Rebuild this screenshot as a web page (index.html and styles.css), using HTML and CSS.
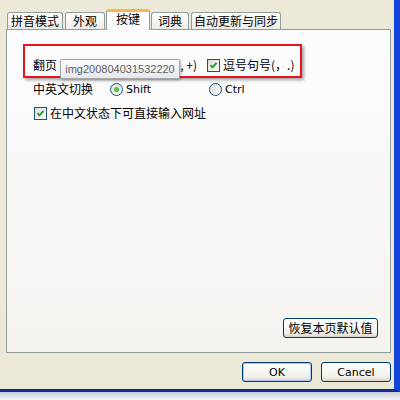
FILE: index.html
```html
<!DOCTYPE html>
<html>
<head>
<meta charset="utf-8">
<link rel="stylesheet" href="styles.css">
</head>
<body>
<div class="window">
  <div class="tabs">
    <div class="tab t1">拼音模式</div>
    <div class="tab t2">外观</div>
    <div class="tab t3 sel">按键</div>
    <div class="tab t4">词典</div>
    <div class="tab t5">自动更新与同步</div>
  </div>
  <div class="panel">
    <div class="grid">
      <div class="lbl">翻页</div>
      <div class="opt"><span class="cb"><svg viewBox="0 0 11 11" width="11" height="11"><path d="M2.5 5.2 L4.5 7.4 L8.6 2.8" fill="none" stroke="#21a121" stroke-width="1.9"/></svg></span><span class="txt">减号加号(-, +)</span></div>
      <div class="opt"><span class="cb"><svg viewBox="0 0 11 11" width="11" height="11"><path d="M2.5 5.2 L4.5 7.4 L8.6 2.8" fill="none" stroke="#21a121" stroke-width="1.9"/></svg></span><span class="txt">逗号句号(，.)</span></div>
      <div class="lbl">中英文切换</div>
      <div class="opt"><span class="rb on"></span><span class="txt lat">Shift</span></div>
      <div class="opt"><span class="rb"></span><span class="txt lat">Ctrl</span></div>
      <div class="opt wide"><span class="cb"><svg viewBox="0 0 11 11" width="11" height="11"><path d="M2.5 5.2 L4.5 7.4 L8.6 2.8" fill="none" stroke="#21a121" stroke-width="1.9"/></svg></span><span class="txt">在中文状态下可直接输入网址</span></div>
    </div>
    <div class="panel-foot"><button class="btn reset">恢复本页默认值</button></div>
    <div class="annot"></div>
    <div class="tooltip">img200804031532220</div>
  </div>
  <div class="footer">
    <button class="btn ok">OK</button>
    <button class="btn cancel">Cancel</button>
  </div>
</div>
<div class="below"></div>
</body>
</html>
```
FILE: styles.css
```css
html, body {
  margin: 0;
  padding: 0;
}
body {
  width: 400px;
  height: 400px;
  overflow: hidden;
  background: #f2f2f6;
  font-family: "Noto Sans CJK SC", sans-serif;
  font-size: 12px;
  color: #000;
}
.window {
  box-sizing: border-box;
  width: 400px;
  height: 392px;
  background: #ece9d8;
  border-right: 6px solid #1343d8;
  border-bottom: 3px solid #0e2b8c;
  padding: 9px 3px 0 6px;
  display: flex;
  flex-direction: column;
}
.below {
  height: 8px;
  background: linear-gradient(#c9cbd8, #f3f3f7);
}
.tabs {
  display: flex;
  align-items: flex-end;
  height: 21px;
  margin-bottom: -1px;
  padding-left: 1px;
  position: relative;
  z-index: 2;
}
.tab {
  box-sizing: border-box;
  height: 17px;
  margin-bottom: 1px;
  border: 1px solid #919b9c;
  border-bottom: none;
  border-radius: 3px 3px 0 0;
  background: linear-gradient(#ffffff, #ecebe6);
  display: flex;
  align-items: center;
  justify-content: center;
  line-height: 1;
  margin-right: 1px;
}
.t1 { width: 56px; }
.t2 { width: 40px; margin-left: 1px; }
.t3 { width: 44px; }
.t4 { width: 38px; }
.t5 { width: 90px; margin-left: 1px; }
.tab.sel {
  height: 21px;
  margin-bottom: 0;
  background: #fcfcfe;
  border-top: 3px solid #f7b940;
  padding-bottom: 4px;
}
.panel {
  position: relative;
  box-sizing: border-box;
  height: 324px;
  border: 1px solid #919b9c;
  background: linear-gradient(#fcfcfe, #f4f3ee);
  display: flex;
  flex-direction: column;
  padding: 23px 0 0 26px;
}
.grid {
  display: grid;
  grid-template-columns: 75px 99px auto;
  grid-auto-rows: 24px;
  align-items: center;
}
.lbl {
  line-height: 1;
}
.opt {
  display: flex;
  align-items: center;
  gap: 3px;
}
.opt.wide {
  grid-column: 1 / 4;
  margin-left: 1px;
}
.txt {
  line-height: 1;
}
.lat {
  font-family: "DejaVu Sans", sans-serif;
  font-size: 11px;
}
.cb {
  box-sizing: border-box;
  width: 13px;
  height: 13px;
  border: 1px solid #1c5180;
  background: linear-gradient(135deg, #dcdcd7, #ffffff);
  display: flex;
  align-items: center;
  justify-content: center;
  flex: none;
}
.rb {
  box-sizing: border-box;
  width: 13px;
  height: 13px;
  border: 1px solid #1c5180;
  border-radius: 50%;
  background: linear-gradient(135deg, #dcdcd7, #ffffff);
  margin-left: 2px;
  display: flex;
  align-items: center;
  justify-content: center;
  flex: none;
}
.rb.on::after {
  content: "";
  width: 5px;
  height: 5px;
  border-radius: 50%;
  background: radial-gradient(circle at 40% 40%, #5be05b, #21a121);
}
.panel-foot {
  margin-top: auto;
  display: flex;
  justify-content: flex-end;
  padding: 0 12px 14px 0;
}
.btn {
  box-sizing: border-box;
  height: 20px;
  border: 1px solid #003c74;
  border-radius: 3px;
  background: linear-gradient(#ffffff, #f2f1ec 75%, #d9d5cb);
  font-family: "DejaVu Sans", sans-serif;
  font-size: 11px;
  color: #000;
  padding: 0;
  margin: 0;
  line-height: 1;
}
.btn.reset {
  width: 95px;
  font-family: "Noto Sans CJK SC", sans-serif;
  font-size: 12px;
}
.footer {
  display: flex;
  justify-content: flex-end;
  gap: 9px;
  padding-top: 9px;
}
.btn.ok, .btn.cancel {
  width: 70px;
  height: 20px;
}
.btn.ok {
  box-shadow: inset 0 0 0 1px #a8c4f0;
}
.annot {
  position: absolute;
  left: 16px;
  top: 14px;
  width: 279px;
  height: 34px;
  box-sizing: border-box;
  border: 2px solid #e5141c;
  box-shadow: 2px 2px 3px rgba(0, 0, 0, 0.35);
}
.tooltip {
  position: absolute;
  left: 53px;
  top: 29px;
  width: 120px;
  height: 20px;
  box-sizing: border-box;
  border: 1px solid #a5a5a5;
  border-radius: 2px;
  background: linear-gradient(#ffffff, #e6e7ee);
  box-shadow: 1px 1px 3px rgba(0, 0, 0, 0.3);
  font-family: "Liberation Sans", sans-serif;
  font-size: 11px;
  color: #5e5e5e;
  display: flex;
  align-items: center;
  justify-content: center;
  z-index: 3;
}
```
